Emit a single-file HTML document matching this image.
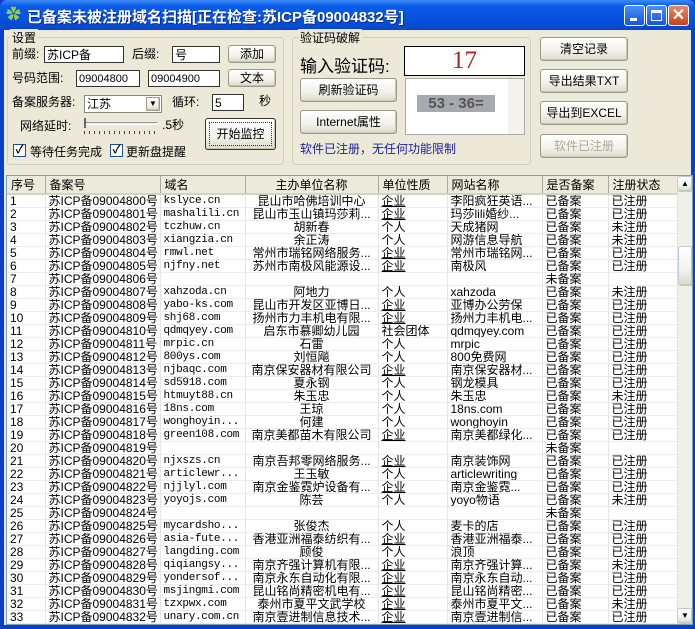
<!DOCTYPE html>
<html><head><meta charset="utf-8"><style>
*{margin:0;padding:0;box-sizing:border-box}
body{width:695px;height:629px;overflow:hidden;background:#0a3fc9;font-family:"Liberation Sans","WenQuanYi Zen Hei","Noto Sans CJK SC",sans-serif;font-size:12px;color:#000;position:relative}
.a{position:absolute;white-space:nowrap}
#tb{left:0;top:0;width:695px;height:30px;background:linear-gradient(#3d8af7,#0a5ce8 20%,#0550dc 70%,#0a46c6);border-radius:7px 7px 0 0}
#body{left:4px;top:30px;width:687px;height:595px;background:#ece9d8}
.grp{border:1px solid #d0d0bf;border-radius:3px}
.lg{background:#ece9d8;padding:0 2px;font-size:12px}
.inp{background:#fff;border:1px solid #7f9db9;font-size:12px;padding:1px 2px;line-height:14px}
.btn{background:linear-gradient(#fff,#f2f1ea 60%,#dcd9cc);border:1px solid #9a9a8e;border-radius:3px;text-align:center;font-size:12px;box-shadow:inset -1px -1px 0 #c8c5b5}
.cb{width:13px;height:13px;border:1px solid #1c5180;background:#fff;font-size:11px;line-height:11px;text-align:center;font-weight:bold}
.wb{width:21px;height:21px;border:1px solid #fff;border-radius:3px;background:linear-gradient(#4b8ef8,#1655e0);top:5px}
table{border-collapse:collapse;table-layout:fixed;font-size:12px}
td{height:13px;line-height:12px;padding:0 3px;overflow:hidden;white-space:nowrap;border-right:1px solid #e4e4e4;border-bottom:1px solid #ececec}
th{height:16px;font-weight:normal;text-align:left;padding:0 4px;background:#ebeadb;border-right:1px solid #aca899;border-bottom:2px solid #d6d2c2}
.m{font-family:"Liberation Mono",monospace;font-size:11px;letter-spacing:-.3px}
.c{text-align:center}
</style></head><body>
<div class="a" id="tb"></div>
<div class="a" style="left:6px;top:7px;width:16px;height:16px;color:#8fd14f;font-size:15px;line-height:16px">✿</div>
<div class="a" style="left:27px;top:6px;color:#fff;font-weight:bold;font-size:15px;text-shadow:1px 1px #0a2a8a">已备案未被注册域名扫描[正在检查:苏ICP备09004832号]</div>
<div class="a wb" style="left:624px"><div class="a" style="left:5px;top:12px;width:7px;height:3px;background:#fff"></div></div>
<div class="a wb" style="left:646px"><div class="a" style="left:4px;top:4px;width:11px;height:11px;border:1px solid #fff;border-top-width:3px"></div></div>
<div class="a wb" style="left:668px;background:linear-gradient(#e98b6a,#c9401c);color:#fff;font-size:16px;line-height:19px;text-align:center;font-weight:bold">✕</div>
<div class="a" id="body"></div>

<div class="a grp" style="left:7px;top:37px;width:277px;height:128px"></div>
<div class="a lg" style="left:10px;top:29px">设置</div>
<div class="a" style="left:12px;top:45px">前缀:</div>
<div class="a inp" style="left:44px;top:46px;width:80px;height:17px;border-color:#333">苏ICP备</div>
<div class="a" style="left:132px;top:45px">后缀:</div>
<div class="a inp" style="left:172px;top:46px;width:48px;height:17px;border-color:#333">号</div>
<div class="a btn" style="left:228px;top:45px;width:48px;height:18px;line-height:16px">添加</div>
<div class="a" style="left:12px;top:69px">号码范围:</div>
<div class="a inp" style="left:76px;top:70px;width:64px;height:17px;border-color:#333;font-size:11px">09004800</div>
<div class="a inp" style="left:148px;top:70px;width:72px;height:17px;border-color:#333;font-size:11px">09004900</div>
<div class="a btn" style="left:228px;top:69px;width:48px;height:18px;line-height:16px">文本</div>
<div class="a" style="left:12px;top:93px">备案服务器:</div>
<div class="a inp" style="left:84px;top:95px;width:78px;height:18px;border-color:#888">江苏</div>
<div class="a btn" style="left:146px;top:97px;width:14px;height:14px;font-size:8px;line-height:12px;border-radius:1px">▼</div>
<div class="a" style="left:172px;top:93px">循环:</div>
<div class="a inp" style="left:212px;top:94px;width:32px;height:17px;border-color:#333">5</div>
<div class="a" style="left:259px;top:92px">秒</div>
<div class="a" style="left:20px;top:117px">网络延时:</div>
<div class="a" style="left:84px;top:122px;width:74px;height:3px;border:1px solid #999;border-right-color:#fff;border-bottom-color:#fff"></div>
<div class="a" style="left:84px;top:118px;width:2px;height:10px;background:#666"></div>
<div class="a" style="left:84px;top:131px;width:74px;height:3px;background:repeating-linear-gradient(90deg,#444 0 1px,transparent 1px 5px)"></div>
<div class="a" style="left:162px;top:116px">.5秒</div>
<div class="a btn" style="left:205px;top:118px;width:71px;height:32px;line-height:30px;border-color:#333"><div class="a" style="left:3px;top:3px;right:3px;bottom:3px;border:1px dotted #333"></div>开始监控</div>
<div class="a cb" style="left:13px;top:144px">✓</div>
<div class="a" style="left:30px;top:143px">等待任务完成</div>
<div class="a cb" style="left:110px;top:144px">✓</div>
<div class="a" style="left:126px;top:143px">更新盘提醒</div>

<div class="a grp" style="left:292px;top:37px;width:239px;height:128px"></div>
<div class="a lg" style="left:298px;top:29px">验证码破解</div>
<div class="a" style="left:300px;top:52px;font-size:17px">输入验证码:</div>
<div class="a" style="left:404px;top:46px;width:121px;height:30px;background:#fff;border:1px solid #000;text-align:center;color:#b02020;font-family:'Liberation Serif',serif;font-size:25px;line-height:28px">17</div>
<div class="a btn" style="left:300px;top:78px;width:97px;height:24px;line-height:22px">刷新验证码</div>
<div class="a btn" style="left:300px;top:110px;width:97px;height:24px;line-height:22px">Internet属性</div>
<div class="a" style="left:405px;top:78px;width:120px;height:57px;background:#fff;border:1px solid #aaa"></div>
<div class="a" style="left:508px;top:79px;width:16px;height:55px;background:#f4f3ee"></div>
<div class="a" style="left:417px;top:95px;width:78px;height:17px;background:#a8a8b0;color:#555;font-weight:bold;font-size:15px;line-height:17px;text-align:center">53 - 36=</div>
<div class="a" style="left:300px;top:140px;color:#20209a">软件已注册，无任何功能限制</div>
<div class="a btn" style="left:540px;top:37px;width:88px;height:24px;line-height:22px">清空记录</div>
<div class="a btn" style="left:540px;top:69px;width:88px;height:24px;line-height:22px">导出结果TXT</div>
<div class="a btn" style="left:540px;top:101px;width:88px;height:24px;line-height:22px">导出到EXCEL</div>
<div class="a btn" style="left:540px;top:134px;width:88px;height:24px;line-height:22px;color:#aca899">软件已注册</div>

<div class="a" style="left:6px;top:175px;width:687px;height:450px;background:#fff;border:1px solid #7f9db9;overflow:hidden">
<table style="width:671px">
<colgroup><col style="width:38px"><col style="width:115px"><col style="width:85px"><col style="width:133px"><col style="width:69px"><col style="width:95px"><col style="width:66px"><col style="width:70px"></colgroup>
<tr><th>序号</th><th>备案号</th><th>域名</th><th class="c">主办单位名称</th><th>单位性质</th><th>网站名称</th><th>是否备案</th><th>注册状态</th></tr>
<tbody id="tb2"></tbody>
</table>
<div class="a" style="left:670px;top:0;width:16px;height:449px;background:#f0efe8;border-left:1px solid #e0e0e0"></div>
<div class="a btn" style="left:670px;top:0;width:16px;height:16px;font-size:8px;line-height:14px;border-color:#bcd">▲</div>
<div class="a btn" style="left:671px;top:70px;width:15px;height:40px;border-color:#bcd"></div>
<div class="a btn" style="left:670px;top:432px;width:16px;height:16px;font-size:8px;line-height:14px;border-color:#bcd">▼</div>
</div>
<script>
var d=`kslyce.cn|昆山市哈佛培训中心|企业|李阳疯狂英语...|已备案|已注册
mashalili.cn|昆山市玉山镇玛莎莉...|企业|玛莎lili婚纱...|已备案|已注册
tczhuw.cn|胡新春|个人|天成猪网|已备案|未注册
xiangzia.cn|余正涛|个人|网游信息导航|已备案|未注册
rmwl.net|常州市瑞铭网络服务...|企业|常州市瑞铭网...|已备案|已注册
njfny.net|苏州市南极风能源设...|企业|南极风|已备案|已注册
||||未备案|
xahzoda.cn|阿地力|个人|xahzoda|已备案|未注册
yabo-ks.com|昆山市开发区亚博日...|企业|亚博办公劳保|已备案|已注册
shj68.com|扬州市力丰机电有限...|企业|扬州力丰机电...|已备案|已注册
qdmqyey.com|启东市慕卿幼儿园|社会团体|qdmqyey.com|已备案|已注册
mrpic.cn|石雷|个人|mrpic|已备案|已注册
800ys.com|刘恒飚|个人|800免费网|已备案|已注册
njbaqc.com|南京保安器材有限公司|企业|南京保安器材...|已备案|已注册
sd5918.com|夏永钢|个人|钢龙模具|已备案|已注册
htmuyt88.cn|朱玉忠|个人|朱玉忠|已备案|未注册
18ns.com|王琼|个人|18ns.com|已备案|已注册
wonghoyin...|何建|个人|wonghoyin|已备案|已注册
green108.com|南京美都苗木有限公司|企业|南京美都绿化...|已备案|已注册
||||未备案|
njxszs.cn|南京吾邦零网络服务...|企业|南京装饰网|已备案|已注册
articlewr...|王玉敏|个人|articlewriting|已备案|已注册
njjlyl.com|南京金鉴霓炉设备有...|企业|南京金鉴霓...|已备案|已注册
yoyojs.com|陈芸|个人|yoyo物语|已备案|未注册
||||未备案|
mycardsho...|张俊杰|个人|麦卡的店|已备案|已注册
asia-fute...|香港亚洲福泰纺织有...|企业|香港亚洲福泰...|已备案|已注册
langding.com|顾俊|个人|浪顶|已备案|已注册
qiqiangsy...|南京齐强计算机有限...|企业|南京齐强计算...|已备案|未注册
yondersof...|南京永东自动化有限...|企业|南京永东自动...|已备案|已注册
msjingmi.com|昆山铭尚精密机电有...|企业|昆山铭尚精密...|已备案|已注册
tzxpwx.com|泰州市夏平文武学校|企业|泰州市夏平文...|已备案|未注册
unary.com.cn|南京壹进制信息技术...|企业|南京壹进制信...|已备案|已注册
||||未备案|`.split("\n"),h="";
d.forEach(function(r,i){var f=r.split("|");h+="<tr><td>"+(i+1)+"</td><td>苏ICP备0900"+(4800+i)+"号</td><td class='m'>"+f[0]+"</td><td class='c'>"+f[1]+"</td><td"+(f[2]=="企业"?" style='text-decoration:underline'":"")+">"+f[2]+"</td><td>"+f[3]+"</td><td>"+f[4]+"</td><td>"+f[5]+"</td></tr>";});
document.getElementById("tb2").innerHTML=h;
</script>
</body></html>
